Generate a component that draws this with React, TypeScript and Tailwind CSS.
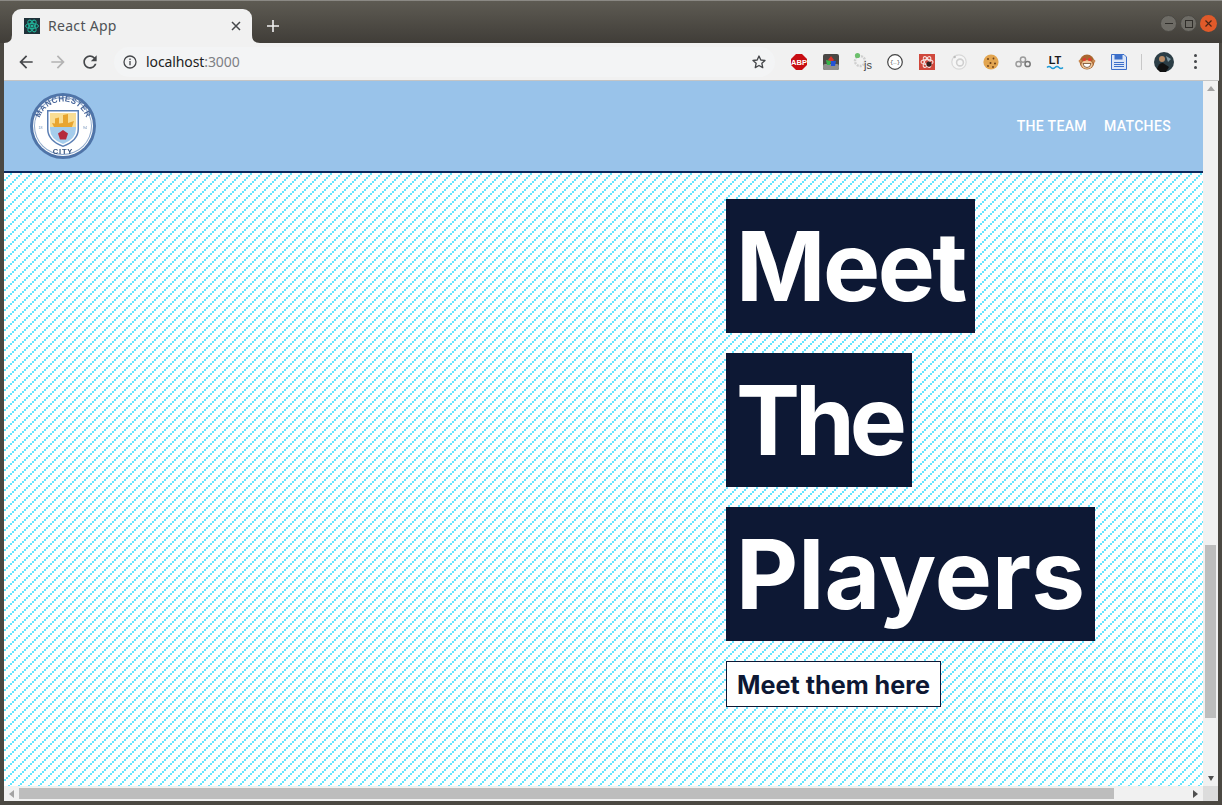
import type { ReactNode } from "react";

const arrowPath = "M20 11H7.83l5.59-5.59L12 4l-8 8 8 8 1.41-1.41L7.83 13H20v-2z";
const reloadPath =
  "M17.65 6.35C16.2 4.9 14.21 4 12 4c-4.42 0-7.99 3.58-7.99 8s3.57 8 7.99 8c3.73 0 6.84-2.55 7.73-6h-2.08c-.82 2.33-3.04 4-5.65 4-3.31 0-6-2.69-6-6s2.69-6 6-6c1.66 0 3.14.69 4.22 1.78L13 11h7V4l-2.35 2.35z";

function ReactFavicon() {
  return (
    <svg width="16" height="16" viewBox="0 0 16 16">
      <rect width="16" height="16" fill="#20323a" />
      <g fill="none" stroke="#22b49a" strokeWidth="1">
        <ellipse cx="8" cy="8" rx="6.5" ry="2.6" />
        <ellipse cx="8" cy="8" rx="6.5" ry="2.6" transform="rotate(60 8 8)" />
        <ellipse cx="8" cy="8" rx="6.5" ry="2.6" transform="rotate(120 8 8)" />
      </g>
      <circle cx="8" cy="8" r="1.6" fill="#22b49a" />
    </svg>
  );
}

function Ext({ children }: { children: ReactNode }) {
  return (
    <div className="flex h-4 w-8 items-center justify-center">
      <svg width="16" height="16" viewBox="0 0 16 16" className="overflow-visible">
        {children}
      </svg>
    </div>
  );
}

function Extensions() {
  return (
    <div className="flex items-center">
      {/* adblock */}
      <Ext>
        <polygon points="5,0 11,0 16,5 16,11 11,16 5,16 0,11 0,5" fill="#c70d12" />
        <text x="8" y="10.8" textAnchor="middle" fontSize="7.5" fontWeight="700" fill="#fff" fontFamily="Liberation Sans">ABP</text>
      </Ext>
      {/* color picker thing */}
      <Ext>
        <rect width="16" height="16" rx="2" fill="#4a4845" />
        <rect y="10" width="16" height="6" rx="2" fill="#8f8f8d" />
        <polygon points="8,2 11,6 8,9 5,6" fill="#d8342c" />
        <polygon points="3,6 8,7 7,11 4,11" fill="#37b34a" />
        <polygon points="8,7 13,7 12,12 8,12" fill="#2352d6" />
      </Ext>
      {/* js gears */}
      <Ext>
        <circle cx="5" cy="7" r="5" fill="none" stroke="#cfcfcf" strokeWidth="2.4" strokeDasharray="2 1" />
        <circle cx="2.5" cy="1.5" r="2.6" fill="#6cbf6c" />
        <text x="9" y="15" fontSize="11" fontWeight="500" fill="#444" fontFamily="Liberation Sans">js</text>
      </Ext>
      {/* json viewer */}
      <Ext>
        <circle cx="8" cy="8" r="7.3" fill="#fff" stroke="#444" strokeWidth="1.2" />
        <text x="8" y="10.3" textAnchor="middle" fontSize="5.5" fill="#444" fontFamily="Liberation Mono">{"{…}"}</text>
      </Ext>
      {/* redux */}
      <Ext>
        <rect width="16" height="16" fill="#d0483c" />
        <g fill="none" stroke="#f6e3e0" strokeWidth="1.1">
          <ellipse cx="8" cy="8" rx="6" ry="2.4" />
          <ellipse cx="8" cy="8" rx="6" ry="2.4" transform="rotate(60 8 8)" />
          <ellipse cx="8" cy="8" rx="6" ry="2.4" transform="rotate(120 8 8)" />
        </g>
        <circle cx="10" cy="10" r="2.6" fill="#33201f" />
      </Ext>
      {/* grey ring */}
      <Ext>
        <circle cx="8" cy="8" r="7.2" fill="#f6f6f6" stroke="#d8d8d8" strokeWidth="1.2" />
        <circle cx="9" cy="8.5" r="3.4" fill="none" stroke="#cfcfcf" strokeWidth="1.6" />
        <circle cx="3.7" cy="3" r="1.2" fill="#bdbdbd" />
      </Ext>
      {/* cookie */}
      <Ext>
        <circle cx="8" cy="8" r="7.6" fill="#e2a550" />
        <circle cx="5" cy="5" r="1" fill="#6b3e17" />
        <circle cx="10.5" cy="4.5" r="0.9" fill="#6b3e17" />
        <circle cx="7.5" cy="9" r="1" fill="#6b3e17" />
        <circle cx="12" cy="9.5" r="1" fill="#6b3e17" />
        <circle cx="5" cy="12" r="0.9" fill="#6b3e17" />
        <circle cx="10" cy="13" r="0.9" fill="#6b3e17" />
      </Ext>
      {/* rings */}
      <Ext>
        <g fill="none" stroke="#9b9b9b" strokeWidth="1.5">
          <circle cx="3.6" cy="10" r="2.6" />
          <circle cx="8" cy="5.6" r="2.6" />
          <circle cx="12.6" cy="10" r="2.6" stroke="#777" />
        </g>
      </Ext>
      {/* LT */}
      <Ext>
        <text x="8" y="10" textAnchor="middle" fontSize="11" fontWeight="700" fill="#1c1c1c" fontFamily="Liberation Sans">LT</text>
        <path d="M0 13.5q2-2 4 0t4 0 4 0 4 0" fill="none" stroke="#1f9bd6" strokeWidth="1.4" />
      </Ext>
      {/* monkey */}
      <Ext>
        <circle cx="8" cy="8" r="7.4" fill="#a9662f" />
        <circle cx="1.2" cy="7" r="1.6" fill="#c98a52" />
        <circle cx="14.8" cy="7" r="1.6" fill="#c98a52" />
        <ellipse cx="8" cy="10.5" rx="5.6" ry="4.2" fill="#f0c79b" />
        <circle cx="5.4" cy="5.4" r="1.6" fill="#e23a2e" />
        <circle cx="10.6" cy="5.4" r="1.6" fill="#e23a2e" />
        <path d="M4 9.5h8q-.6 4-4 4t-4-4z" fill="#fff" stroke="#5b3312" strokeWidth="0.7" />
      </Ext>
      {/* floppy */}
      <Ext>
        <path d="M0.5.5h12.5l2.5 2.5v12.5h-15z" fill="#dce6f7" stroke="#3c6fc9" />
        <rect x="3.5" y="1" width="8" height="4.5" fill="#3c6fc9" />
        <g stroke="#3c6fc9" strokeWidth="1">
          <path d="M3 8.5h10M3 10.5h10M3 12.5h10" />
        </g>
      </Ext>
    </div>
  );
}

function BrowserChrome() {
  return (
    <>
      {/* title bar with the tab */}
      <div className="flex h-[43px] shrink-0 items-end border-t border-[#8b8984] bg-gradient-to-b from-[#5e5b53] to-[#403d38] pl-3">
        <div className="relative flex h-[34px] w-[240px] items-center rounded-t-[9px] bg-[#f1f1f1] pr-[11px] pl-3">
          <ReactFavicon />
          <span className="ml-2 flex-1 pb-[2px] text-[14px] tracking-[0.3px] text-[#4f5256] [font-family:'Noto_Sans',sans-serif]">React App</span>
          <svg width="10" height="10" viewBox="0 0 10 10" stroke="#45474a" strokeWidth="1.5">
            <path d="M1 1l8 8M9 1l-8 8" />
          </svg>
          <svg width="8" height="8" viewBox="0 0 8 8" className="absolute bottom-0 -left-2" fill="#f1f1f1">
            <path d="M8 0v8H0q8 0 8-8z" />
          </svg>
          <svg width="8" height="8" viewBox="0 0 8 8" className="absolute -right-2 bottom-0" fill="#f1f1f1">
            <path d="M0 0v8h8q-8 0-8-8z" />
          </svg>
        </div>
        <svg width="12" height="12" viewBox="0 0 12 12" stroke="#f1f1f1" strokeWidth="1.6" className="mb-[11px] ml-[15px]">
          <path d="M6 0v12M0 6h12" />
        </svg>
        <div className="mr-[5px] mb-[11px] ml-auto flex gap-[3px]">
          <div className="flex h-[17px] w-[17px] items-center justify-center rounded-full border border-[#4a4843] bg-[#6e6c66]">
            <div className="h-px w-[8px] bg-[#2f2d29]" />
          </div>
          <div className="flex h-[17px] w-[17px] items-center justify-center rounded-full border border-[#4a4843] bg-[#6e6c66]">
            <div className="h-[8px] w-[8px] border border-[#2f2d29]" />
          </div>
          <div className="flex h-[17px] w-[17px] items-center justify-center rounded-full bg-[#e05a2a]">
            <svg width="7" height="7" viewBox="0 0 7 7" stroke="#4a2415" strokeWidth="1.2">
              <path d="M.5.5l6 6M6.5.5l-6 6" />
            </svg>
          </div>
        </div>
      </div>

      {/* toolbar */}
      <div className="flex h-[38px] shrink-0 border-x-4 border-r-[3px] border-[#4b4842] bg-[#f1f1f1]">
        <div className="flex flex-1 items-center border-b border-[#c4c4c4]">
          <svg width="20" height="20" viewBox="0 0 24 24" fill="#45474a" className="ml-[12px]">
            <path d={arrowPath} />
          </svg>
          <svg width="20" height="20" viewBox="0 0 24 24" fill="#b3b3b3" className="ml-[12px] rotate-180">
            <path d={arrowPath} />
          </svg>
          <svg width="20" height="20" viewBox="0 0 24 24" fill="#45474a" className="ml-[12px]">
            <path d={reloadPath} />
          </svg>
          <div className="ml-[14px] flex h-[30px] w-[661px] items-center rounded-full bg-[#f3f4f5] pr-[8px] pl-[8px]">
            <svg width="16" height="16" viewBox="0 0 16 16" fill="none" stroke="#45474a" strokeWidth="1.3">
              <circle cx="8" cy="8" r="6" />
              <path d="M8 7v4.2M8 4.6v1.3" />
            </svg>
            <span className="ml-[8px] text-[14px] tracking-[-0.1px] text-[#222] [font-family:'Noto_Sans',sans-serif]">
              localhost<span className="text-[#7d8084]">:3000</span>
            </span>
            <svg width="16" height="16" viewBox="0 0 24 24" fill="none" stroke="#45474a" strokeWidth="2" strokeLinejoin="round" className="ml-auto">
              <path d="M12 3l2.7 6 6.3.7-4.7 4.3 1.3 6.4-5.6-3.2-5.6 3.2 1.3-6.4L3 9.7 9.3 9z" />
            </svg>
          </div>
          <div className="ml-[8px]">
            <Extensions />
          </div>
          <div className="ml-[6px] h-[16px] w-px bg-[#c8c8c8]" />
          <svg width="20" height="20" viewBox="0 0 20 20" className="ml-[12px]">
            <circle cx="10" cy="10" r="10" fill="#2c3e46" />
            <circle cx="8" cy="7" r="3" fill="#b98d68" />
            <path d="M3 17q2-7 6-6l6 4-3 5H6z" fill="#111" />
            <path d="M12 4l5 3-3 3z" fill="#7f9aa5" />
          </svg>
          <div className="ml-[20px] flex flex-col gap-[3px]">
            <div className="h-[3px] w-[3px] rounded-full bg-[#45474a]" />
            <div className="h-[3px] w-[3px] rounded-full bg-[#45474a]" />
            <div className="h-[3px] w-[3px] rounded-full bg-[#45474a]" />
          </div>
        </div>
      </div>
    </>
  );
}

function CityCrest() {
  return (
    <svg width="66" height="66" viewBox="0 0 66 66" className="blur-[0.4px]">
      <defs>
        <path id="crest-top" d="M8.500 33a24.500 24.500 0 0 1 49 0" />
      </defs>
      <circle cx="33" cy="33" r="33" fill="#4f74a8" />
      <circle cx="33" cy="33" r="30" fill="#fff" />
      <circle cx="33" cy="33" r="29" fill="#8ea9cc" />
      <circle cx="33" cy="33" r="28" fill="#fff" />
      <text fontSize="8" fontWeight="700" fill="#46659a" letterSpacing="0.4" fontFamily="Liberation Sans">
        <textPath href="#crest-top" startOffset="50%" textAnchor="middle">MANCHESTER</textPath>
      </text>
      <text x="33" y="61" textAnchor="middle" fontSize="7.5" fontWeight="700" fill="#34527f" letterSpacing="0.8" fontFamily="Liberation Sans">CITY</text>
      <text x="8.500" y="36" fontSize="3.6" fill="#6f8fb8" fontFamily="Liberation Sans">18</text>
      <text x="53" y="36" fontSize="3.6" fill="#6f8fb8" fontFamily="Liberation Sans">94</text>
      <path d="M17 17h32v19q0 12-16 18-16-6-16-18z" fill="#5b7fb4" />
      <path d="M18.500 18.500h29v17.500q0 11-14.500 16.500-14.500-5.500-14.500-16.500z" fill="#fff" />
      <path d="M20 20h26v14H20z" fill="#f9dd94" />
      <path d="M20 34h26v2q0 10-13 15-13-5-13-15z" fill="#a5cdec" />
      <path d="M22 30l2 4h18l2-6-6 2v-9l-5 1v8l-4 .5v-6l-4 1v5z" fill="#e8a530" />
      <polygon points="33,37 38,40.500 36,46.500 30,46.500 28,40.500" fill="#b52a3c" />
    </svg>
  );
}

function Heading({ children, spacing }: { children: string; spacing: string }) {
  return (
    <h1 className={`bg-[#0d1834] px-[10px] text-[96px] leading-[134px] font-bold text-white [font-family:Inter,sans-serif] ${spacing}`}>
      {children}
    </h1>
  );
}

function Page() {
  return (
    <div className="flex min-h-0 flex-1 flex-col overflow-hidden bg-white">
      <header className="flex h-[92px] shrink-0 items-center justify-between border-b-2 border-[#0d2a5e] bg-[#99c3ea] pr-[24px] pl-[26px]">
        <CityCrest />
        <nav className="flex gap-[1px] text-[14px] font-medium tracking-[0.35px] text-white [font-family:Roboto,sans-serif]">
          <a className="px-[8px] py-[6px]">THE TEAM</a>
          <a className="px-[8px] py-[6px]">MATCHES</a>
        </nav>
      </header>
      {/* the stripes are 2x2 blocks stepping up a 10px tile */}
      <main className="flex-1 bg-white bg-[conic-gradient(from_270deg_at_2px_2px,#66e5ff_90deg,transparent_0),conic-gradient(from_270deg_at_2px_2px,#66e5ff_90deg,transparent_0),conic-gradient(from_270deg_at_2px_2px,#66e5ff_90deg,transparent_0),conic-gradient(from_270deg_at_2px_2px,#66e5ff_90deg,transparent_0),conic-gradient(from_270deg_at_2px_2px,#66e5ff_90deg,transparent_0)] bg-[length:10px_10px] bg-[position:6px_0px,4px_2px,2px_4px,0px_6px,8px_8px] pt-[26px] pl-[722px]">
        <div className="flex flex-col items-start gap-[20px]">
          <Heading spacing="tracking-[-2.5px]">Meet</Heading>
          <Heading spacing="tracking-[-5px]">The</Heading>
          <Heading spacing="tracking-[0.1px]">Players</Heading>
          <button className="h-[46px] border border-[#0d1834] bg-white px-[10px] pt-[3px] text-[25.2px] font-bold text-[#0d1834] [font-family:Inter,sans-serif]">
            Meet them here
          </button>
        </div>
      </main>
    </div>
  );
}

function Scrollbars() {
  return (
    <div className="flex w-[15px] flex-1 shrink-0 flex-col items-center bg-[#f1f1f1]">
      <div className="mt-[5px] h-0 w-0 border-x-[4px] border-b-[5px] border-x-transparent border-b-[#a3a3a3]" />
      <div className="mt-[454px] h-[173px] w-[11px] bg-[#bdbdbd]" />
      <div className="mt-[58px] h-0 w-0 border-x-[3.5px] border-t-[5px] border-x-transparent border-t-[#505050]" />
    </div>
  );
}

export default function App() {
  return (
    <div className="flex h-[805px] w-[1222px] flex-col overflow-hidden bg-[#4b4842]">
      <BrowserChrome />
      <div className="flex min-h-0 flex-1 border-r-[4px] border-b-[4px] border-l-[4px] border-[#4b4842]">
        <div className="flex min-w-0 flex-1 flex-col">
          <Page />
          <div className="flex h-[15px] shrink-0 items-center bg-[#f1f1f1]">
            <div className="ml-[5px] h-0 w-0 border-y-[4px] border-r-[5px] border-y-transparent border-r-[#a3a3a3]" />
            <div className="ml-[5px] h-[11px] w-[1095px] bg-[#bdbdbd]" />
            <div className="mr-[5px] ml-auto h-0 w-0 border-y-[4px] border-l-[5px] border-y-transparent border-l-[#505050]" />
          </div>
        </div>
        <div className="flex flex-col">
          <Scrollbars />
          <div className="h-[15px] w-[15px] bg-[#dcdcdc]" />
        </div>
      </div>
    </div>
  );
}
